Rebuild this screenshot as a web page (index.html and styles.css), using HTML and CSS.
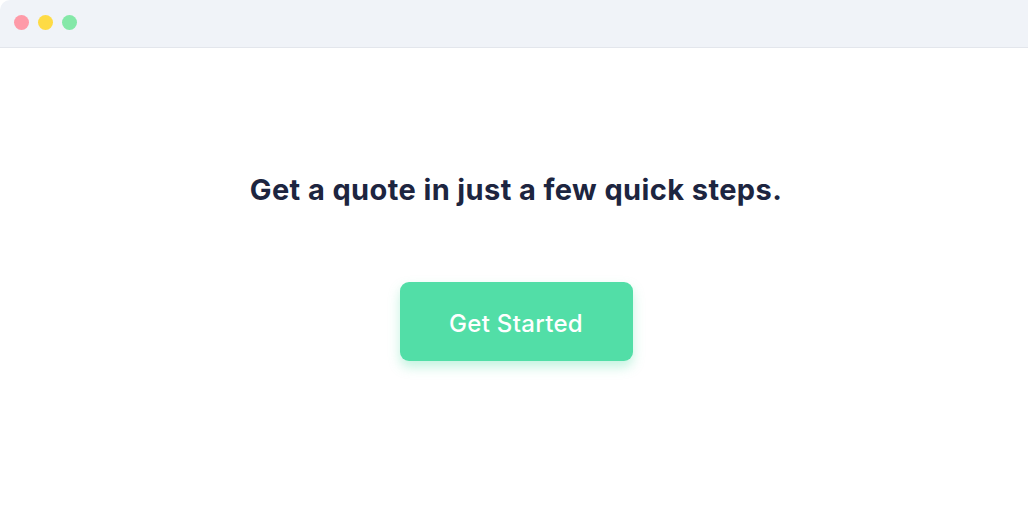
FILE: index.html
```html
<!DOCTYPE html>
<html lang="en">
<head>
<meta charset="utf-8">
<title>Get a quote</title>
<link rel="stylesheet" href="styles.css">
</head>
<body>
<div class="window">
  <header class="titlebar">
    <span class="dot dot-red"></span>
    <span class="dot dot-yellow"></span>
    <span class="dot dot-green"></span>
  </header>
  <main class="content">
    <h1 class="title">Get a quote in just a few quick steps.</h1>
    <button class="cta" type="button">Get Started</button>
  </main>
</div>
</body>
</html>
```

FILE: styles.css
```css
* { box-sizing: border-box; }
html, body {
  margin: 0;
  padding: 0;
  height: 100%;
  background: #ffffff;
}
body {
  font-family: Inter, "Noto Sans", "Liberation Sans", sans-serif;
}
.window {
  height: 527px;
  display: flex;
  flex-direction: column;
  background: #ffffff;
  border-top-left-radius: 10px;
  overflow: hidden;
}
.titlebar {
  height: 48px;
  flex: 0 0 48px;
  background: #f0f3f8;
  border-bottom: 1px solid #e3e6ec;
  display: flex;
  align-items: center;
  gap: 9px;
  padding: 0 0 3px 14px;
}
.dot {
  width: 15px;
  height: 15px;
  border-radius: 50%;
  display: block;
}
.dot-red { background: #fe9aa8; }
.dot-yellow { background: #fedb45; }
.dot-green { background: #84e8a8; }
.content {
  flex: 1;
  display: flex;
  flex-direction: column;
  align-items: center;
  padding-top: 122px;
  padding-left: 4px;
}
.title {
  margin: 0;
  font-size: 29px;
  font-weight: 700;
  color: #1d2540;
  letter-spacing: 0.4px;
  line-height: 40px;
}
.cta {
  margin-top: 72px;
  width: 233px;
  height: 79px;
  padding: 4px 0 0;
  border: none;
  border-radius: 9px;
  background: #52dea7;
  color: #ffffff;
  font-family: inherit;
  font-size: 24px;
  font-weight: 500;
  letter-spacing: 0.3px;
  box-shadow: 0 6px 12px rgba(82, 222, 167, 0.35);
  cursor: pointer;
}
```
